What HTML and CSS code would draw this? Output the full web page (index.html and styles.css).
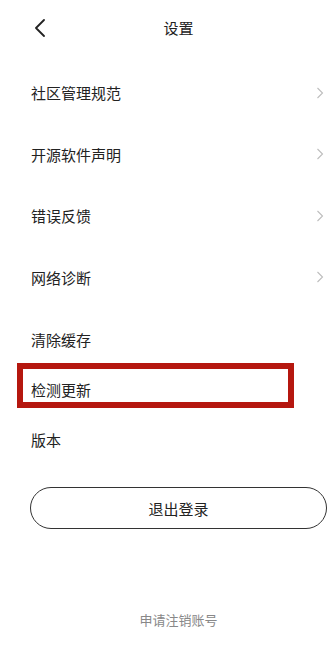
FILE: index.html
```html
<!DOCTYPE html>
<html lang="zh">
<head>
<meta charset="utf-8">
<link rel="stylesheet" href="styles.css">
</head>
<body>
<div class="page">
  <header class="header">
    <div class="back">
      <svg width="12" height="20" viewBox="0 0 12 20"><path d="M9 2 L1 10 L9 18" fill="none" stroke="#222" stroke-width="1.8" stroke-linecap="round" stroke-linejoin="round"/></svg>
    </div>
    <div class="title">设置</div>
    <div></div>
  </header>
  <div class="list">
    <div class="row tall"><span>社区管理规范</span><svg class="chev" width="8" height="12" viewBox="0 0 8 12"><path d="M1.5 1 L6.5 6 L1.5 11" fill="none" stroke="#bdbdbd" stroke-width="1.1"/></svg></div>
    <div class="row tall"><span>开源软件声明</span><svg class="chev" width="8" height="12" viewBox="0 0 8 12"><path d="M1.5 1 L6.5 6 L1.5 11" fill="none" stroke="#bdbdbd" stroke-width="1.1"/></svg></div>
    <div class="row tall"><span>错误反馈</span><svg class="chev" width="8" height="12" viewBox="0 0 8 12"><path d="M1.5 1 L6.5 6 L1.5 11" fill="none" stroke="#bdbdbd" stroke-width="1.1"/></svg></div>
    <div class="row tall"><span>网络诊断</span><svg class="chev" width="8" height="12" viewBox="0 0 8 12"><path d="M1.5 1 L6.5 6 L1.5 11" fill="none" stroke="#bdbdbd" stroke-width="1.1"/></svg></div>
  </div>
  <div class="list short-list">
    <div class="row short"><span>清除缓存</span></div>
    <div class="row short highlighted"><span>检测更新</span><div class="mark"></div></div>
    <div class="row short"><span>版本</span></div>
  </div>
  <div class="logout">退出登录</div>
  <div class="cancel">申请注销账号</div>
</div>
</body>
</html>
```
FILE: styles.css
```css
* { box-sizing: border-box; }
html, body { margin: 0; padding: 0; background: #fff; }
body {
  font-family: "Noto Sans CJK SC", "Noto Sans", sans-serif;
  color: #222;
}
.page { width: 335px; height: 672px; overflow: hidden; }
.header {
  height: 56px;
  padding-left: 22px;
  display: grid;
  grid-template-columns: 1fr auto 1fr;
  align-items: center;
}
.back { padding-left: 13px; display: flex; align-items: center; }
.title { font-size: 15px; line-height: 20px; color: #222; }
.list { margin-top: 6px; display: flex; flex-direction: column; }
.row {
  display: flex;
  align-items: center;
  justify-content: space-between;
  padding-left: 31px;
  padding-right: 11px;
  font-size: 15px;
  color: #222;
  position: relative;
}
.tall { height: 61.5px; }
.short { height: 50px; }
.chev { display: block; }
.mark {
  position: absolute;
  left: 17px;
  top: -1px;
  width: 277px;
  height: 45px;
  border: 6px solid #b5170f;
}
.logout {
  margin: 23px 8px 0 30px;
  height: 42px;
  border: 1px solid #333;
  border-radius: 21px;
  display: flex;
  align-items: center;
  justify-content: center;
  font-size: 15px;
  color: #222;
}
.cancel {
  margin-top: 81px;
  padding-left: 22px;
  text-align: center;
  font-size: 13px;
  line-height: 20px;
  color: #888;
}
```
